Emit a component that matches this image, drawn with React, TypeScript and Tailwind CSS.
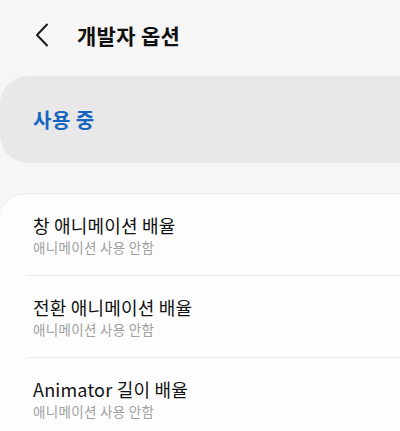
import React from "react";

const items = ["창 애니메이션 배율", "전환 애니메이션 배율", "Animator 길이 배율"];

export default function App() {
  return (
    <div
      className="h-[431px] w-[400px] overflow-hidden bg-[#f6f6f6]"
      style={{ fontFamily: '"Noto Sans CJK KR", "Noto Sans", sans-serif' }}
    >
      <div className="flex h-[70px] items-center pl-[35px]">
        <svg width="14" height="24" viewBox="0 0 14 24" fill="none">
          <path d="M12 1.5 L2 12 L12 22.5" stroke="#1a1a1a" strokeWidth="2" strokeLinecap="round" strokeLinejoin="round" />
        </svg>
        <div className="ml-[28px] text-[21px] font-bold leading-none tracking-[0.3px] text-[#111]">개발자 옵션</div>
      </div>
      <div className="mt-[6px] flex h-[87px] items-center rounded-l-[28px] bg-[#e8e8e8] pl-[33px]">
        <span className="text-[20px] font-bold leading-none tracking-[0.5px] text-[#1565c0]">사용 중</span>
      </div>
      <div className="mt-[30px] rounded-tl-[26px] border-t border-[#ebebeb] bg-[#fdfdfd]">
        {items.map((t, i) => (
          <div key={t}>
            {i > 0 && <div className="ml-[27px] h-[1px] bg-[#ebebeb]" />}
            <div className="flex h-[81px] flex-col justify-center px-[33px]">
              <div className="text-[18px] leading-[23px] tracking-[0.2px] text-[#111]">{t}</div>
              <div className="mt-[1px] text-[13.5px] leading-[18px] tracking-[0.3px] text-[#a0a0a0]">애니메이션 사용 안함</div>
            </div>
          </div>
        ))}
      </div>
    </div>
  );
}
